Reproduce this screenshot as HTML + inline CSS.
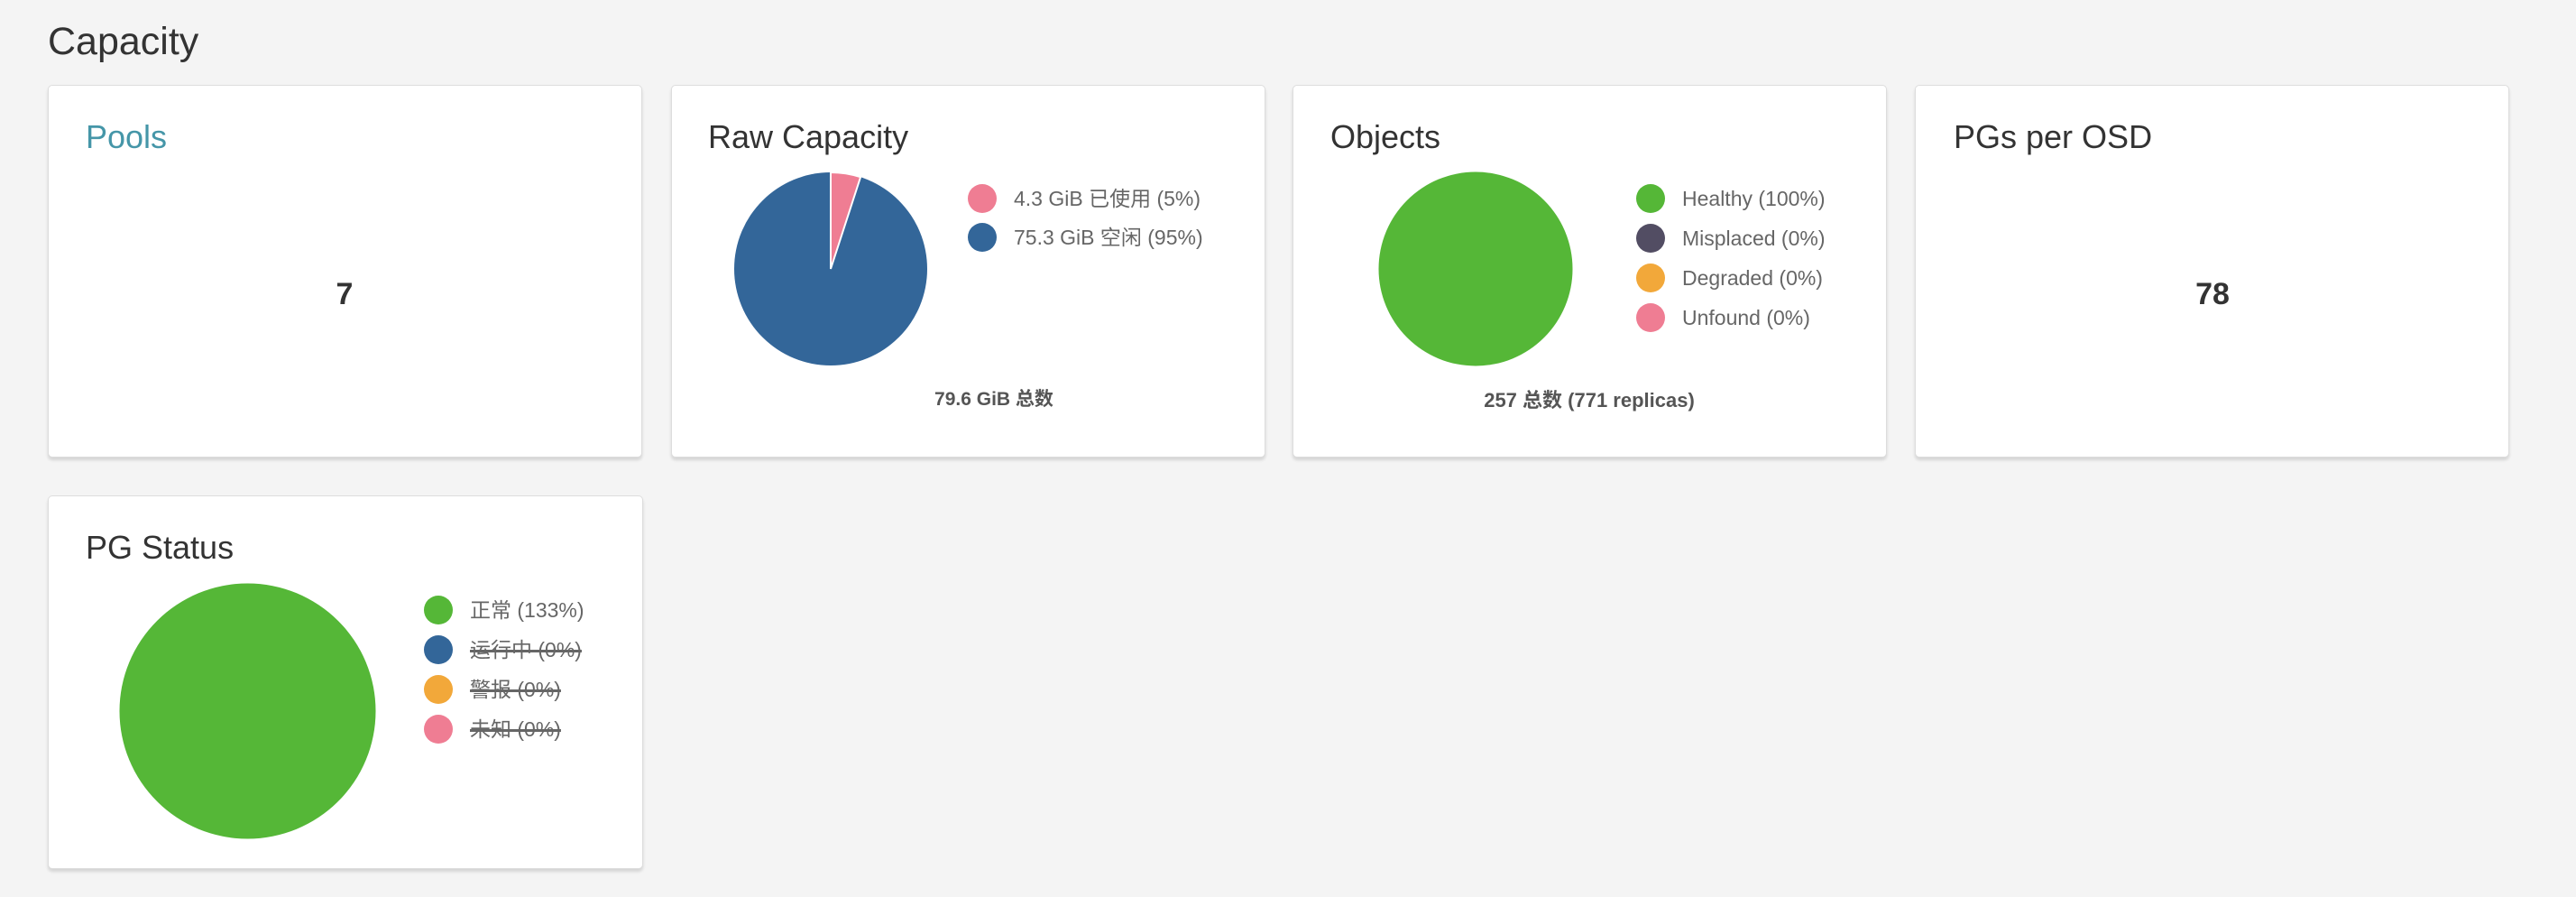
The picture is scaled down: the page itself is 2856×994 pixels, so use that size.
<!DOCTYPE html>
<html><head><meta charset="utf-8"><style>
html,body{margin:0;padding:0;width:2856px;height:994px;background:#f4f4f4;overflow:hidden;font-family:"Liberation Sans","Noto Sans CJK SC",sans-serif;color:#333}
.h{position:absolute;left:53px;top:22px;font-size:43px;color:#333}
.card{position:absolute;background:#fff;border:1px solid #ddd;border-radius:5px;box-shadow:0 3px 3px rgba(0,0,0,.13);box-sizing:border-box}
.t{position:absolute;font-size:36px;color:#333;white-space:nowrap}
.big{position:absolute;font-size:34px;font-weight:bold;color:#333;transform:translateX(-50%)}
.leg{position:absolute;font-size:23px;color:#666;white-space:nowrap;line-height:32px}
.leg .d{position:absolute;width:32px;height:32px;border-radius:50%;left:0;top:0}
.leg span{position:absolute;left:51px;top:0}
.s{text-decoration:line-through;text-decoration-thickness:3px}
.foot{position:absolute;font-size:22px;font-weight:bold;color:#555;transform:translateX(-50%);white-space:nowrap}
</style></head><body>
<div class="h">Capacity</div>

<div class="card" style="left:53px;top:94px;width:659px;height:413px"></div>
<div class="t" style="left:95px;top:131px;color:#4596a8">Pools</div>
<div class="big" style="left:382px;top:307px">7</div>

<div class="card" style="left:744px;top:94px;width:659px;height:413px"></div>
<div class="t" style="left:785px;top:131px">Raw Capacity</div>
<svg style="position:absolute;left:813px;top:190px" width="216" height="216" viewBox="0 0 216 216">
<circle cx="108" cy="108" r="107" fill="#336699"/>
<path d="M108 108 L108 1 A107 107 0 0 1 141.1 6.2 Z" fill="#ef7d93" stroke="#fff" stroke-width="2"/>
</svg>
<div class="leg" style="left:1073px;top:204px"><i class="d" style="background:#ef7d93"></i><span>4.3 GiB 已使用 (5%)</span></div>
<div class="leg" style="left:1073px;top:247px"><i class="d" style="background:#336699"></i><span>75.3 GiB 空闲 (95%)</span></div>
<div class="foot" style="left:1102px;top:426px;font-size:21px">79.6 GiB 总数</div>

<div class="card" style="left:1433px;top:94px;width:659px;height:413px"></div>
<div class="t" style="left:1475px;top:131px">Objects</div>
<svg style="position:absolute;left:1528px;top:190px" width="216" height="216"><circle cx="108" cy="108" r="107.5" fill="#55b737"/></svg>
<div class="leg" style="left:1814px;top:204px"><i class="d" style="background:#55b737"></i><span>Healthy (100%)</span></div>
<div class="leg" style="left:1814px;top:248px"><i class="d" style="background:#524d63"></i><span>Misplaced (0%)</span></div>
<div class="leg" style="left:1814px;top:292px"><i class="d" style="background:#f2a83a"></i><span>Degraded (0%)</span></div>
<div class="leg" style="left:1814px;top:336px"><i class="d" style="background:#ef7d93"></i><span>Unfound (0%)</span></div>
<div class="foot" style="left:1762px;top:426px">257 总数 (771 replicas)</div>

<div class="card" style="left:2123px;top:94px;width:659px;height:413px"></div>
<div class="t" style="left:2166px;top:131px">PGs per OSD</div>
<div class="big" style="left:2453px;top:307px">78</div>

<div class="card" style="left:53px;top:549px;width:660px;height:414px"></div>
<div class="t" style="left:95px;top:586px">PG Status</div>
<svg style="position:absolute;left:132px;top:646px" width="285" height="284"><ellipse cx="142.5" cy="142" rx="142" ry="141.5" fill="#55b737"/></svg>
<div class="leg" style="left:470px;top:660px"><i class="d" style="background:#55b737"></i><span>正常 (133%)</span></div>
<div class="leg" style="left:470px;top:704px"><i class="d" style="background:#336699"></i><span class="s">运行中 (0%)</span></div>
<div class="leg" style="left:470px;top:748px"><i class="d" style="background:#f2a83a"></i><span class="s">警报 (0%)</span></div>
<div class="leg" style="left:470px;top:792px"><i class="d" style="background:#ef7d93"></i><span class="s">未知 (0%)</span></div>
</body></html>
